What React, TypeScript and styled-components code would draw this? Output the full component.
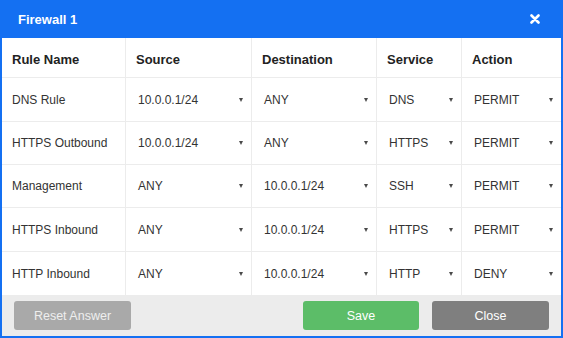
import React from 'react';
import styled, { createGlobalStyle } from 'styled-components';

const GlobalStyle = createGlobalStyle`
  html, body {
    margin: 0;
    padding: 0;
    background: #ffffff;
  }
  body {
    font-family: "Liberation Sans", Arial, sans-serif;
  }
`;

const Modal = styled('div')({
  width: '563px',
  height: '338px',
  boxSizing: 'border-box',
  border: '2px solid #1470f2',
  borderTop: 'none',
  display: 'flex',
  flexDirection: 'column',
  background: '#ffffff',
});

const TitleBar = styled('header')({
  height: '38px',
  margin: '0 -2px',
  padding: '0 22px 0 18px',
  background: '#1470f2',
  display: 'flex',
  alignItems: 'center',
  justifyContent: 'space-between',
  flexShrink: 0,
});

const Title = styled('h1')({
  margin: 0,
  color: '#ffffff',
  fontSize: '13px',
  fontWeight: 700,
});

const CloseIcon = styled('button')({
  border: 'none',
  background: 'transparent',
  padding: 0,
  width: '12px',
  height: '12px',
  display: 'flex',
  alignItems: 'center',
  justifyContent: 'center',
  cursor: 'pointer',
});

const RuleTable = styled('div')({
  display: 'grid',
  gridTemplateColumns: '124px 126px 125px 85px 99px',
  gridTemplateRows: '40px 44px 43px 43px 44px 43px',
});

const HeadCell = styled('div')({
  display: 'flex',
  alignItems: 'center',
  padding: '3px 10px 0',
  fontSize: '13px',
  fontWeight: 700,
  color: '#222222',
  borderBottom: '1px solid #ececec',
  borderRight: '1px solid #ececec',
  '&:nth-child(5n)': {
    borderRight: 'none',
  },
});

const Cell = styled('div')(
  ({ last, first }: { last?: boolean; first?: boolean }) => ({
    display: 'flex',
    alignItems: 'center',
    padding: first ? '0 8px 0 10px' : '0 8px 0 12px',
    fontSize: '12px',
    color: '#333333',
    borderBottom: last ? 'none' : '1px solid #ececec',
    borderRight: '1px solid #ececec',
    '&:nth-child(5n)': {
      borderRight: 'none',
    },
  })
);

const SelectBox = styled('div')({
  flex: 1,
  display: 'flex',
  alignItems: 'center',
  justifyContent: 'space-between',
  cursor: 'pointer',
});

const Caret = styled('span')({
  width: 0,
  height: 0,
  borderLeft: '2.5px solid transparent',
  borderRight: '2.5px solid transparent',
  borderTop: '4px solid #4a4a4a',
});

const Footer = styled('footer')({
  flex: 1,
  background: '#ececec',
  display: 'flex',
  alignItems: 'center',
  justifyContent: 'space-between',
  padding: '0 12px',
});

const ButtonGroup = styled('div')({
  display: 'flex',
  gap: '13px',
});

const variants = {
  reset: { bg: '#a9a9a9', fg: '#eeeeee' },
  save: { bg: '#5cbd68', fg: '#ffffff' },
  close: { bg: '#7f7f7f', fg: '#ffffff' },
};

const Button = styled('button')(
  ({ variant }: { variant: keyof typeof variants }) => ({
    width: variant === 'save' ? '116px' : '117px',
    height: '29px',
    border: 'none',
    borderRadius: '3px',
    fontFamily: '"Liberation Sans", Arial, sans-serif',
    fontSize: '12.5px',
    background: variants[variant].bg,
    color: variants[variant].fg,
    cursor: 'pointer',
  })
);

const rules = [
  ['DNS Rule', '10.0.0.1/24', 'ANY', 'DNS', 'PERMIT'],
  ['HTTPS Outbound', '10.0.0.1/24', 'ANY', 'HTTPS', 'PERMIT'],
  ['Management', 'ANY', '10.0.0.1/24', 'SSH', 'PERMIT'],
  ['HTTPS Inbound', 'ANY', '10.0.0.1/24', 'HTTPS', 'PERMIT'],
  ['HTTP Inbound', 'ANY', '10.0.0.1/24', 'HTTP', 'DENY'],
];

const headers = ['Rule Name', 'Source', 'Destination', 'Service', 'Action'];

const App = (): JSX.Element => {
  return (
    <>
      <GlobalStyle />
      <Modal>
        <TitleBar>
          <Title>Firewall 1</Title>
          <CloseIcon aria-label="close">
            <svg width="10" height="10" viewBox="0 0 10 10">
              <path
                d="M1.5 1.5 L8.5 8.5 M8.5 1.5 L1.5 8.5"
                stroke="#ffffff"
                strokeWidth="2.6"
                strokeLinecap="round"
              />
            </svg>
          </CloseIcon>
        </TitleBar>
        <RuleTable>
          {headers.map((h) => (
            <HeadCell key={h}>{h}</HeadCell>
          ))}
          {rules.map((row, r) =>
            row.map((value, c) => (
              <Cell
                key={`${r}-${c}`}
                first={c === 0}
                last={r === rules.length - 1}
              >
                {c === 0 ? (
                  value
                ) : (
                  <SelectBox>
                    <span>{value}</span>
                    <Caret />
                  </SelectBox>
                )}
              </Cell>
            ))
          )}
        </RuleTable>
        <Footer>
          <Button variant="reset">Reset Answer</Button>
          <ButtonGroup>
            <Button variant="save">Save</Button>
            <Button variant="close">Close</Button>
          </ButtonGroup>
        </Footer>
      </Modal>
    </>
  );
};

export default App;
